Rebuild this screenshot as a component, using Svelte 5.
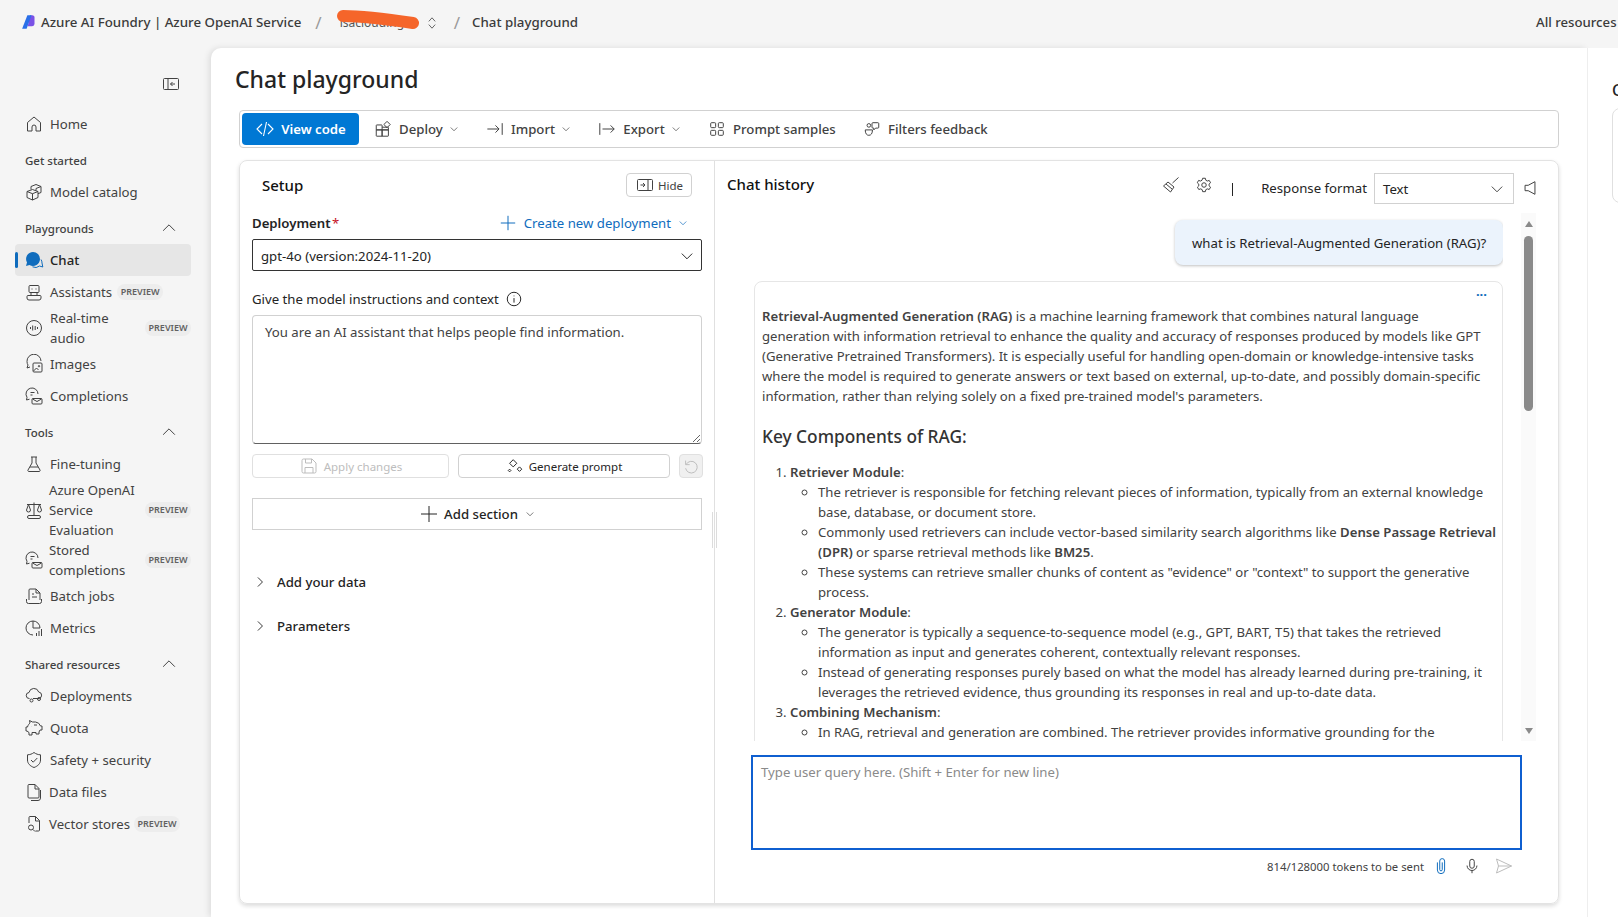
<script>
  const icons = {
    collapse: 'M3.5 4.5h13a1 1 0 0 1 1 1v9a1 1 0 0 1-1 1h-13a1 1 0 0 1-1-1v-9a1 1 0 0 1 1-1z M7 4.5v11 M14 10H9.5 M11.5 8 9.5 10l2 2',
    home: 'M3.5 8.5 10 3l6.5 5.5V17H12v-4a2 2 0 0 0-4 0v4H3.5z',
    catalog: 'M12 2.5l5 2v6l-3 1.2 M7 4.5l5-2 M7 4.5v3 M12 6.5l5-2 M12 6.5v2 M3 9.5l5.5-2 5.5 2v6l-5.5 2.5L3 15.5z M3 9.5l5.5 2.2L14 9.5 M8.5 11.7V18',
    bot: 'M6 3.5h8a1 1 0 0 1 1 1v5a1 1 0 0 1-1 1H6a1 1 0 0 1-1-1v-5a1 1 0 0 1 1-1z M8 6.5v1 M12 6.5v1 M4 13.5h12a1 1 0 0 1 1 1V16a2 2 0 0 1-2 2H5a2 2 0 0 1-2-2v-1.5a1 1 0 0 1 1-1z M7 10.5v3 M13 10.5v3',
    audio: 'M10 2.5a7.5 7.5 0 1 1 0 15 7.5 7.5 0 0 1 0-15z M6.5 9v2 M8.7 7.5v5 M11.2 8v4 M13.5 9v2',
    images: 'M17 7a7 7 0 0 0-14 .5c0 1.4.4 2.6 1 3.5L3 14l3-1 M10 9h7a1 1 0 0 1 1 1v7a1 1 0 0 1-1 1h-7a1 1 0 0 1-1-1v-7a1 1 0 0 1 1-1z M9.5 17l3-3 2 2 M15 11.5a.7.7 0 1 1 0 1.4.7.7 0 0 1 0-1.4z',
    completions: 'M14 8a6 6 0 1 0-11 3.3L2.5 14l3-.8 M6.5 6.5h4 M6.5 9h2 M9 12.5h8a1 1 0 0 1 1 1V17a1 1 0 0 1-1 1H9a1 1 0 0 1-1-1v-3.5a1 1 0 0 1 1-1z M8.5 13l4.5 2.5 4.5-2.5',
    flask: 'M7 3h6 M8 3v6l-4 7a1 1 0 0 0 1 1.5h10a1 1 0 0 0 1-1.5l-4-7V3 M6 13h8',
    scale: 'M10 2.5V15 M3 4.5h14 M4.5 4.5 2.5 10a2 2 0 0 0 4 0z M15.5 4.5 13.5 10a2 2 0 0 0 4 0z M5 15.5h10a1.5 1.5 0 0 1 0 3H5a1.5 1.5 0 0 1 0-3z',
    batch: 'M5 14V4a1 1 0 0 1 1-1h6l4 4v7 M12 3v4h4 M8 8h2 M8 11h5 M2.5 13v2.5a2 2 0 0 0 2 2h11a2 2 0 0 0 2-2V13',
    metrics: 'M9 3a7 7 0 1 0 0 14 M9 3v7h7a7 7 0 0 0-7-7z M12.5 18v-3 M15 18v-5 M17.5 18v-7',
    deploy: 'M5.5 12.5a3 3 0 0 1-.5-6 5 5 0 0 1 9.7-.5 3.3 3.3 0 0 1 .3 6.5H9 M9 14.5a1.5 1.5 0 1 1-3 0 1.5 1.5 0 0 1 3 0z M16.5 13a1.5 1.5 0 1 1-3 0 1.5 1.5 0 0 1 3 0z',
    quota: 'M6 5l-.5-2.5 3 1.5h3a6 6 0 0 1 5 4h1.5v4H16l-1 2v2h-3v-1.5H8V17H5v-2.5L3 13H2V9h1.5C4 7 5 6 6 5z M7.5 8.5h.1 M10 7h3',
    shield: 'M10 2.5c2 1.5 4 2.2 6.5 2.3V10c0 3.5-2.5 6-6.5 7.5C6 16 3.5 13.5 3.5 10V4.8C6 4.7 8 4 10 2.5z M7 10l2.2 2.2L13.3 8',
    files: 'M5 2.5h6l4 4V15a1 1 0 0 1-1 1H5a1 1 0 0 1-1-1V3.5a1 1 0 0 1 1-1z M11 2.5V7h4 M16.5 8v8a2.5 2.5 0 0 1-2.5 2.5H7',
    vector: 'M5 9V3.5a1 1 0 0 1 1-1h5.5l4 4V16a1 1 0 0 1-1 1h-3 M11.5 2.5V7h4 M7 11a2.5 2.5 0 1 1 0 5 2.5 2.5 0 0 1 0-5z M9 15.5l2 2',
    code: 'M7 5 2 10l5 5 M13 5l5 5-5 5 M11.5 3l-3 14',
    apps: 'M3 5.5h5.5a.5.5 0 0 1 .5.5v5H2.5V6a.5.5 0 0 1 .5-.5z M9 8h6.5a.5.5 0 0 1 .5.5V11H9 M2.5 11H9v7H3a.5.5 0 0 1-.5-.5z M9 11h7v6.5a.5.5 0 0 1-.5.5H9z M14.5 1.5l3.5 3.5-3.5 3.5L11 5z',
    import: 'M1.5 10h13 M10.5 6l4 4-4 4 M18 3.5v13',
    export: 'M2 3.5v13 M5 10h13 M14 6l4 4-4 4',
    grid: 'M4 3h3.5a1 1 0 0 1 1 1v3.5a1 1 0 0 1-1 1H4a1 1 0 0 1-1-1V4a1 1 0 0 1 1-1z M12.5 3H16a1 1 0 0 1 1 1v3.5a1 1 0 0 1-1 1h-3.5a1 1 0 0 1-1-1V4a1 1 0 0 1 1-1z M4 11.5h3.5a1 1 0 0 1 1 1V16a1 1 0 0 1-1 1H4a1 1 0 0 1-1-1v-3.5a1 1 0 0 1 1-1z M12.5 11.5H16a1 1 0 0 1 1 1V16a1 1 0 0 1-1 1h-3.5a1 1 0 0 1-1-1v-3.5a1 1 0 0 1 1-1z',
    filters: 'M6.5 4a2 2 0 1 1 0 4 2 2 0 0 1 0-4z M2.5 11h8c0 4-1.5 6-4 6s-4-2-4-6z M11 3h5.5a1 1 0 0 1 1 1v4a1 1 0 0 1-1 1H14l-2 2V9h-1a1 1 0 0 1-1-1V4a1 1 0 0 1 1-1z',
    hide: 'M3.5 4.5h13a1 1 0 0 1 1 1v9a1 1 0 0 1-1 1h-13a1 1 0 0 1-1-1v-9a1 1 0 0 1 1-1z M13 4.5v11 M5.5 10H10 M8 8l2 2-2 2',
    info: 'M10 2.5a7.5 7.5 0 1 1 0 15 7.5 7.5 0 0 1 0-15z M10 9v5 M10 6.2v.8',
    save: 'M4.5 3H13l4 4v8.5a1.5 1.5 0 0 1-1.5 1.5h-11A1.5 1.5 0 0 1 3 15.5v-11A1.5 1.5 0 0 1 4.5 3z M6.5 3v4h6V3 M6 17v-5.5h8V17',
    sparkle: 'M8 3l4 4-4 4-4-4z M15 11l2.5 2.5L15 16l-2.5-2.5z M4 13.5l1.5 1.5L4 16.5 2.5 15z',
    undo: 'M4 4v4.5h4.5 M4.5 8.5a6.5 6.5 0 1 1-.5 4',
    plus: 'M10 2v16 M2 10h16',
    chevronR: 'M7 3.5l6.5 6.5L7 16.5',
    chevronD: 'M3.5 7l6.5 6.5L16.5 7',
    chevronU: 'M3.5 13L10 6.5l6.5 6.5',
    updown: 'M6 8l4-4.5L14 8 M6 12l4 4.5 4-4.5',
    broom: 'M17.5 2.5l-6 5.5 M7 7l6 5-3.5 5L2.5 11z M5 9l6 5',
    gear: 'M8.5 2.5h3l.5 2.2 1.6.9 2.2-.7 1.5 2.6-1.7 1.5v1.9l1.7 1.5-1.5 2.6-2.2-.7-1.6.9-.5 2.2h-3l-.5-2.2-1.6-.9-2.2.7-1.5-2.6L4.2 11V9L2.5 7.5 4 4.9l2.2.7 1.6-.9z M10 7.5a2.5 2.5 0 1 1 0 5 2.5 2.5 0 0 1 0-5z',
    speaker: 'M15.5 3v14L8 13H4.5V7H8z',
    clip: 'M6 6v8.5a4 4 0 0 0 8 0V4.5a2.7 2.7 0 0 0-5.4 0V14a1.4 1.4 0 0 0 2.8 0V6',
    mic: 'M10 2.5a2.5 2.5 0 0 1 2.5 2.5v5a2.5 2.5 0 0 1-5 0V5A2.5 2.5 0 0 1 10 2.5z M4.5 9.5a5.5 5.5 0 0 0 11 0 M10 15v3',
    send: 'M2.5 3l15 7-15 7 2-7z M4.5 10h13'
  };

  const nav = [
    { items: [{ label: 'Home', icon: 'home' }] },
    { title: 'Get started', items: [{ label: 'Model catalog', icon: 'catalog' }] },
    {
      title: 'Playgrounds',
      open: true,
      items: [
        { label: 'Chat', icon: 'chat', active: true },
        { label: 'Assistants', icon: 'bot', pill: 'inline' },
        { label: 'Real-time audio', icon: 'audio', pill: 'end', width: 72 },
        { label: 'Images', icon: 'images' },
        { label: 'Completions', icon: 'completions' }
      ]
    },
    {
      title: 'Tools',
      open: true,
      items: [
        { label: 'Fine-tuning', icon: 'flask' },
        { label: 'Azure OpenAI Service Evaluation', icon: 'scale', pill: 'end', width: 90, tight: true },
        { label: 'Stored completions', icon: 'completions', pill: 'end', width: 90, tight: true },
        { label: 'Batch jobs', icon: 'batch' },
        { label: 'Metrics', icon: 'metrics' }
      ]
    },
    {
      title: 'Shared resources',
      open: true,
      items: [
        { label: 'Deployments', icon: 'deploy' },
        { label: 'Quota', icon: 'quota' },
        { label: 'Safety + security', icon: 'shield' },
        { label: 'Data files', icon: 'files', tight: true },
        { label: 'Vector stores', icon: 'vector', pill: 'inline', tight: true }
      ]
    }
  ];

  const tools = [
    { label: 'Deploy', icon: 'apps', menu: true },
    { label: 'Import', icon: 'import', menu: true },
    { label: 'Export', icon: 'export', menu: true },
    { label: 'Prompt samples', icon: 'grid' },
    { label: 'Filters feedback', icon: 'filters' }
  ];
</script>

{#snippet ic(name, cls = '')}
  <svg class="ic {cls}" viewBox="0 0 20 20" aria-hidden="true"><path d={icons[name]} /></svg>
{/snippet}

<div class="page">
  <header class="topbar">
    <svg class="logo" viewBox="0 0 20 20" aria-hidden="true">
      <path d="M12 1h3c2 0 3 1.3 3 3v8c0 2-1.3 3.5-3.5 3.5H9z" fill="#7a52e6" />
      <path d="M8.5 1H14L7.5 19H1.5z" fill="#2a6fe8" />
    </svg>
    <span class="crumb">Azure AI Foundry | Azure OpenAI Service</span>
    <span class="slash">/</span>
    <span class="project">
      isaclouding
      <svg class="scribble" viewBox="0 0 84 20" aria-hidden="true"><path d="M7 6c22 0 50 4 70 7" /></svg>
    </span>
    {@render ic('updown', 'updown')}
    <span class="slash second">/</span>
    <span class="crumb">Chat playground</span>
    <span class="resources">All resources</span>
  </header>

  <div class="body">
    <aside class="sidebar">
      <div class="collapse">{@render ic('collapse')}</div>
      {#each nav as group}
        <section class="group">
          {#if group.title}
            <div class="group-title">
              <span>{group.title}</span>
              {#if group.open}{@render ic('chevronU', 'i18')}{/if}
            </div>
          {/if}
          {#each group.items as item}
            <div class="item" class:active={item.active} class:tight={item.tight}>
              {#if item.icon === 'chat'}
                <svg class="ic" viewBox="0 0 20 20" aria-hidden="true">
                  <path class="solid" d="M9 2a7 7 0 0 1 7 7 7 7 0 0 1-10.5 6L2 16l1-3.5A7 7 0 0 1 9 2z" />
                  <path class="blue" d="M17 9.5a6 6 0 0 1 1 3.5l.8 4-3.3-1a6.5 6.5 0 0 1-7 .8" />
                </svg>
              {:else}
                {@render ic(item.icon)}
              {/if}
              <span class="label" class:wrap={item.width} style:width={item.width ? item.width + 'px' : null}>{item.label}</span>
              {#if item.pill}
                <span class="pill" class:end={item.pill === 'end'}>PREVIEW</span>
              {/if}
            </div>
          {/each}
        </section>
      {/each}
    </aside>

    <main class="panel">
      <h1>Chat playground</h1>

      <div class="toolbar">
        <button class="primary">{@render ic('code', 'code')}View code</button>
        {#each tools as t}
          <button class="tool">
            {@render ic(t.icon, 'i18')}
            <span>{t.label}</span>
            {#if t.menu}{@render ic('chevronD', 'i10')}{/if}
          </button>
        {/each}
      </div>

      <div class="card">
        <section class="setup">
          <div class="setup-head">
            <h2>Setup</h2>
            <button class="hide">{@render ic('hide')}Hide</button>
          </div>

          <div class="deploy-row">
            <span class="strong">Deployment <em>*</em></span>
            <span class="create">{@render ic('plus', 'i18 blue-line')}Create new deployment{@render ic('chevronD', 'i10 blue-line')}</span>
          </div>
          <div class="select">
            <span>gpt-4o (version:2024-11-20)</span>
            {@render ic('chevronD', 'i16 dark')}
          </div>

          <div class="instr">Give the model instructions and context {@render ic('info', 'i18 dark')}</div>
          <div class="prompt">
            You are an AI assistant that helps people find information.
            <svg class="grip" viewBox="0 0 8 8" aria-hidden="true"><path d="M1 8l7-7M5 8l3-3" /></svg>
          </div>

          <div class="prompt-actions">
            <button class="small disabled">{@render ic('save', 'muted')}Apply changes</button>
            <button class="small gen">{@render ic('sparkle', 'i18 dark')}Generate prompt</button>
            <button class="undo">{@render ic('undo', 'i18 muted')}</button>
          </div>

          <button class="add-section">{@render ic('plus', 'dark')}<span>Add section</span>{@render ic('chevronD', 'i10')}</button>

          <div class="accordion first">{@render ic('chevronR', 'i14 dark')}Add your data</div>
          <div class="accordion">{@render ic('chevronR', 'i14 dark')}Parameters</div>

          <span class="splitter"></span>
        </section>

        <section class="chat">
          <div class="chat-head">
            <h2>Chat history</h2>
            <div class="controls">
              {@render ic('broom')}
              {@render ic('gear', 'i18 gear')}
              <span class="sep"></span>
              <span class="fmt">Response format</span>
              <div class="fmt-select"><span>Text</span>{@render ic('chevronD', 'i16')}</div>
              {@render ic('speaker', 'i18 speaker')}
            </div>
          </div>

          <div class="thread">
            <div class="messages">
              <div class="user-msg">what is Retrieval-Augmented Generation (RAG)?</div>
              <article class="answer">
                <span class="more">···</span>
                <p>
                  <b>Retrieval-Augmented Generation (RAG)</b> is a machine learning framework that combines natural language<br />
                  generation with information retrieval to enhance the quality and accuracy of responses produced by models like GPT<br />
                  (Generative Pretrained Transformers). It is especially useful for handling open-domain or knowledge-intensive tasks<br />
                  where the model is required to generate answers or text based on external, up-to-date, and possibly domain-specific<br />
                  information, rather than relying solely on a fixed pre-trained model's parameters.
                </p>
                <h3>Key Components of RAG:</h3>
                <ol>
                  <li>
                    <b>Retriever Module</b>:
                    <ul>
                      <li>The retriever is responsible for fetching relevant pieces of information, typically from an external knowledge<br />base, database, or document store.</li>
                      <li>Commonly used retrievers can include vector-based similarity search algorithms like <b>Dense Passage Retrieval<br />(DPR)</b> or sparse retrieval methods like <b>BM25</b>.</li>
                      <li>These systems can retrieve smaller chunks of content as "evidence" or "context" to support the generative<br />process.</li>
                    </ul>
                  </li>
                  <li>
                    <b>Generator Module</b>:
                    <ul>
                      <li>The generator is typically a sequence-to-sequence model (e.g., GPT, BART, T5) that takes the retrieved<br />information as input and generates coherent, contextually relevant responses.</li>
                      <li>Instead of generating responses purely based on what the model has already learned during pre-training, it<br />leverages the retrieved evidence, thus grounding its responses in real and up-to-date data.</li>
                    </ul>
                  </li>
                  <li>
                    <b>Combining Mechanism</b>:
                    <ul>
                      <li>In RAG, retrieval and generation are combined. The retriever provides informative grounding for the</li>
                    </ul>
                  </li>
                </ol>
              </article>
            </div>
            <div class="scrollbar">
              <span class="arrow up"></span>
              <span class="thumb"></span>
              <span class="arrow down"></span>
            </div>
          </div>

          <div class="query">Type user query here. (Shift + Enter for new line)</div>
          <div class="query-foot">
            <span class="tokens">814/128000 tokens to be sent</span>
            {@render ic('clip', 'i18 blue-line')}
            {@render ic('mic', 'i18')}
            {@render ic('send', 'faint')}
          </div>
        </section>
      </div>
    </main>

    <aside class="side-right">
      <div class="side-title">C</div>
      <div class="side-card"></div>
    </aside>
  </div>
</div>

<style>
  :global(body) {
    margin: 0;
    overflow: hidden;
    background: #f5f5f5;
  }
  .page {
    width: 1618px;
    height: 917px;
    overflow: hidden;
    font-family: 'Noto Sans', sans-serif;
    font-size: 13.2px;
    color: #242424;
    background: #f5f5f5;
    display: flex;
    flex-direction: column;
  }
  button {
    font: inherit;
    color: inherit;
    background: none;
    border: none;
    padding: 0;
  }
  .ic {
    width: 20px;
    height: 20px;
    flex: none;
    fill: none;
    stroke: #424242;
    stroke-width: 1;
  }
  .i10 { width: 10px; height: 10px; stroke-width: 1.4; }
  .i14 { width: 14px; height: 14px; stroke-width: 1.3; }
  .i16 { width: 16px; height: 16px; stroke-width: 1.2; }
  .i18 { width: 18px; height: 18px; stroke-width: 1.1; }
  .dark { stroke: #242424; }
  .muted { stroke: #bdbdbd; }
  .faint { stroke: #bdbdbd; }
  .blue-line { stroke: #0f6cbd; }

  .topbar {
    height: 48px;
    flex: none;
    display: flex;
    align-items: center;
    padding: 0 0 4px 21px;
    box-sizing: border-box;
    white-space: nowrap;
  }
  .logo { width: 15px; height: 16px; margin-right: 5px; }
  .crumb { font-weight: 500; font-size: 13.3px; color: #3b3b3b; }
  .slash { color: #9a9a9a; font-size: 17px; margin: 0 14px; }
  .slash.second { margin: 0 12px 0 14px; }
  .project { position: relative; width: 87px; color: #555; font-size: 12px; padding-left: 4px; box-sizing: border-box; }
  .scribble {
    position: absolute;
    left: 0;
    top: -4px;
    width: 84px;
    height: 20px;
    overflow: visible;
    fill: none;
    stroke: #f5652a;
    stroke-width: 12;
    stroke-linecap: round;
  }
  .ic.updown { width: 16px; height: 16px; margin-left: 1px; margin-top: 2px; }
  .resources { margin-left: auto; font-weight: 500; color: #3b3b3b; width: 82px; }

  .body { flex: 1; display: flex; min-height: 0; }

  .sidebar {
    width: 211px;
    flex: none;
    box-sizing: border-box;
    padding-top: 24px;
  }
  .collapse {
    height: 24px;
    margin-bottom: 12px;
    display: flex;
    align-items: center;
    justify-content: flex-end;
    padding-right: 30px;
  }
  .group { margin-bottom: 7px; }
  .group-title {
    height: 28px;
    margin-bottom: 1px;
    box-sizing: border-box;
    padding: 0 33px 2px 25px;
    display: flex;
    align-items: center;
    justify-content: space-between;
    font-size: 11.5px;
    font-weight: 500;
    color: #424242;
  }
  .item {
    position: relative;
    margin-left: 15px;
    width: 176px;
    box-sizing: border-box;
    padding-left: 9px;
    min-height: 32px;
    display: flex;
    align-items: center;
    gap: 6px;
    line-height: 20px;
    border-radius: 4px;
    color: #424242;
  }
  .item.tight { gap: 5px; }
  .item.active { background: #e6e6e6; color: #242424; font-weight: 500; }
  .item.active::before {
    content: '';
    position: absolute;
    left: 0;
    top: 8px;
    width: 3px;
    height: 16px;
    border-radius: 2px;
    background: #0f6cbd;
  }
  .solid { fill: #0f6cbd; stroke: none; }
  .blue { stroke: #0f6cbd; }
  .label.wrap { white-space: normal; }
  .pill {
    height: 16px;
    line-height: 16px;
    padding: 0 3.5px;
    margin-left: -1px;
    border-radius: 8px;
    background: #ededed;
    color: #616161;
    font-size: 9px;
    font-weight: 600;
  }
  .pill.end { position: absolute; right: 0; top: 50%; margin-top: -8px; }

  .panel {
    flex: none;
    width: 1376px;
    box-sizing: border-box;
    background: #fff;
    border-radius: 10px 0 0 0;
    box-shadow: -2px 0 6px rgba(0, 0, 0, 0.1);
    padding: 15px 28px 0;
  }
  h1 {
    margin: 0 0 15px -4px;
    font-size: 23px;
    line-height: 32px;
    font-weight: 500;
  }
  .toolbar {
    height: 38px;
    box-sizing: border-box;
    border: 1px solid #d1d1d1;
    border-radius: 4px;
    display: flex;
    align-items: center;
    padding-left: 2px;
    white-space: nowrap;
  }
  .primary {
    width: 117px;
    height: 32px;
    border-radius: 4px;
    background: #0078d4;
    color: #fff;
    font-weight: 600;
    display: flex;
    align-items: center;
    justify-content: center;
    gap: 6px;
    margin-right: 15px;
  }
  .primary .ic { stroke: #fff; stroke-width: 1.1; }
  .tool {
    display: flex;
    align-items: center;
    gap: 7px;
    color: #424242;
    font-weight: 500;
    margin-right: 27.3px;
  }
  .tool .i10 { margin-left: -1px; }

  .card {
    margin-top: 12px;
    height: 744px;
    box-sizing: border-box;
    border: 1px solid #e3e3e3;
    border-radius: 8px;
    box-shadow: 0 2px 4px rgba(0, 0, 0, 0.14);
    display: grid;
    grid-template-columns: 475px 1fr;
    overflow: hidden;
  }
  h2 { margin: 0; font-size: 15px; font-weight: 500; line-height: 22px; color: #111; }

  .setup {
    border-right: 1px solid #e0e0e0;
    padding: 12px 12px 0;
    position: relative;
  }
  .setup-head { display: flex; justify-content: space-between; align-items: center; padding: 0 10px; }
  .hide {
    width: 66px;
    height: 24px;
    box-sizing: border-box;
    border: 1px solid #d1d1d1;
    border-radius: 4px;
    font-size: 11.5px;
    display: flex;
    align-items: center;
    justify-content: center;
    gap: 3px;
    color: #424242;
  }
  .deploy-row {
    margin-top: 16px;
    height: 20px;
    display: flex;
    align-items: center;
    justify-content: space-between;
    padding-right: 14px;
  }
  .strong { font-weight: 600; }
  .strong em { color: #c50f1f; font-style: normal; font-weight: 400; margin-left: -2px; }
  .create { display: flex; align-items: center; gap: 7px; color: #0f6cbd; }
  .select {
    margin-top: 6px;
    height: 32px;
    box-sizing: border-box;
    border: 1px solid #333;
    border-radius: 2px;
    padding: 1px 6px 0 8px;
    display: flex;
    align-items: center;
    justify-content: space-between;
  }
  .instr {
    margin-top: 18px;
    height: 20px;
    display: flex;
    align-items: center;
    gap: 6px;
  }
  .prompt {
    position: relative;
    margin-top: 6px;
    height: 129px;
    box-sizing: border-box;
    border: 1px solid #d1d1d1;
    border-bottom-color: #616161;
    border-radius: 4px;
    padding: 6px 12px;
    line-height: 20px;
    color: #424242;
  }
  .grip {
    position: absolute;
    right: 1px;
    bottom: 1px;
    width: 8px;
    height: 8px;
    stroke: #666;
    stroke-width: 1;
    fill: none;
  }
  .prompt-actions {
    margin-top: 10px;
    height: 24px;
    display: grid;
    grid-template-columns: 197px 212px 24px;
    gap: 9px;
  }
  .small {
    box-sizing: border-box;
    border: 1px solid #d1d1d1;
    border-radius: 4px;
    font-size: 11.5px;
    display: flex;
    align-items: center;
    justify-content: center;
    gap: 5px;
  }
  .small.disabled { border-color: #e0e0e0; color: #bdbdbd; }
  .undo {
    box-sizing: border-box;
    border: 1px solid #e0e0e0;
    border-radius: 4px;
    background: #f0f0f0;
    display: flex;
    align-items: center;
    justify-content: center;
  }
  .add-section {
    margin-top: 20px;
    width: 100%;
    height: 32px;
    box-sizing: border-box;
    border: 1px solid #d1d1d1;
    display: flex;
    align-items: center;
    justify-content: center;
    gap: 5px;
    font-weight: 500;
  }
  .add-section .i10 { margin-left: 2px; }
  .accordion {
    height: 32px;
    margin-top: 12px;
    display: flex;
    align-items: center;
    gap: 10px;
    padding-left: 1px;
    font-weight: 500;
  }
  .accordion.first { margin-top: 36px; }
  .splitter {
    position: absolute;
    right: -3px;
    top: 351px;
    width: 5px;
    height: 36px;
    border-left: 1px solid #dcdcdc;
    border-right: 1px solid #dcdcdc;
    box-sizing: border-box;
  }

  .chat { display: flex; flex-direction: column; min-width: 0; }
  .chat-head {
    height: 52px;
    box-sizing: border-box;
    padding: 12px 19px 0 12px;
    display: flex;
    justify-content: space-between;
    flex: none;
  }
  .controls { display: flex; align-items: flex-start; }
  .controls > .ic:first-child { margin-top: 2px; }
  .controls .gear { margin: 3px 0 0 14px; }
  .sep { width: 1px; height: 13px; background: #242424; margin: 10px 28px 0 19px; }
  .fmt { line-height: 31px; margin-right: 7px; }
  .fmt-select {
    width: 140px;
    height: 31px;
    box-sizing: border-box;
    border: 1px solid #d1d1d1;
    display: flex;
    align-items: center;
    justify-content: space-between;
    padding: 1px 8px 0;
  }
  .controls .speaker { margin: 6px 0 0 7px; }

  .thread { flex: none; height: 528px; display: flex; overflow: hidden; padding-left: 39px; }
  .messages { width: 749px; flex: none; overflow: hidden; padding-top: 7px; box-sizing: border-box; }
  .user-msg {
    margin-left: auto;
    width: 328px;
    height: 45px;
    box-sizing: border-box;
    border-radius: 8px;
    background: #ebf3fc;
    box-shadow: 0 1px 3px rgba(0, 0, 0, 0.25);
    padding-left: 17px;
    line-height: 46px;
    white-space: nowrap;
    margin-bottom: 16px;
  }
  .answer {
    position: relative;
    border: 1px solid #e6e6e6;
    border-radius: 8px 8px 0 0;
    padding: 24px 7px 0;
    font-size: 13.15px;
    line-height: 20px;
    color: #424242;
    white-space: nowrap;
  }
  .more { position: absolute; right: 15px; top: 2px; color: #0f6cbd; font-weight: 700; }
  p { margin: 0; }
  p b, li b { font-weight: 600; }
  h3 { margin: 18px 0 12px; font-size: 17.3px; line-height: 26px; font-weight: 500; color: #333; }
  ol, ul { margin: 0; padding-left: 28px; }
  .scrollbar {
    margin-left: 18px;
    width: 15px;
    background: #fafafa;
    display: flex;
    flex-direction: column;
    align-items: center;
    padding: 8px 0 7px;
    box-sizing: border-box;
  }
  .arrow { width: 0; height: 0; border-left: 4.5px solid transparent; border-right: 4.5px solid transparent; }
  .arrow.up { border-bottom: 6px solid #8a8a8a; margin-bottom: 9px; }
  .arrow.down { border-top: 6px solid #8a8a8a; margin-top: auto; }
  .thumb { width: 9px; height: 175px; border-radius: 5px; background: #8a8a8a; }

  .query {
    flex: none;
    margin: 14px 0 0 36px;
    width: 771px;
    height: 95px;
    box-sizing: border-box;
    border: 2px solid #0f5fd0;
    padding: 5px 8px;
    line-height: 20px;
    color: #8a8a8a;
  }
  .query-foot {
    flex: none;
    margin-top: 6px;
    height: 20px;
    padding: 0 44px 0 0;
    display: flex;
    align-items: center;
    justify-content: flex-end;
    gap: 13px;
    font-size: 11.3px;
    color: #424242;
    white-space: nowrap;
  }
  .tokens { margin-right: -5px; }

  .side-right {
    flex: 1;
    background: #fff;
    border-left: 1px solid #eee;
    padding: 30px 0 0 24px;
    overflow: hidden;
    white-space: nowrap;
  }
  .side-title { font-size: 16px; font-weight: 500; line-height: 24px; margin-bottom: 6px; }
  .side-card { width: 200px; height: 93px; border: 1px solid #e0e0e0; border-radius: 8px; }
</style>
